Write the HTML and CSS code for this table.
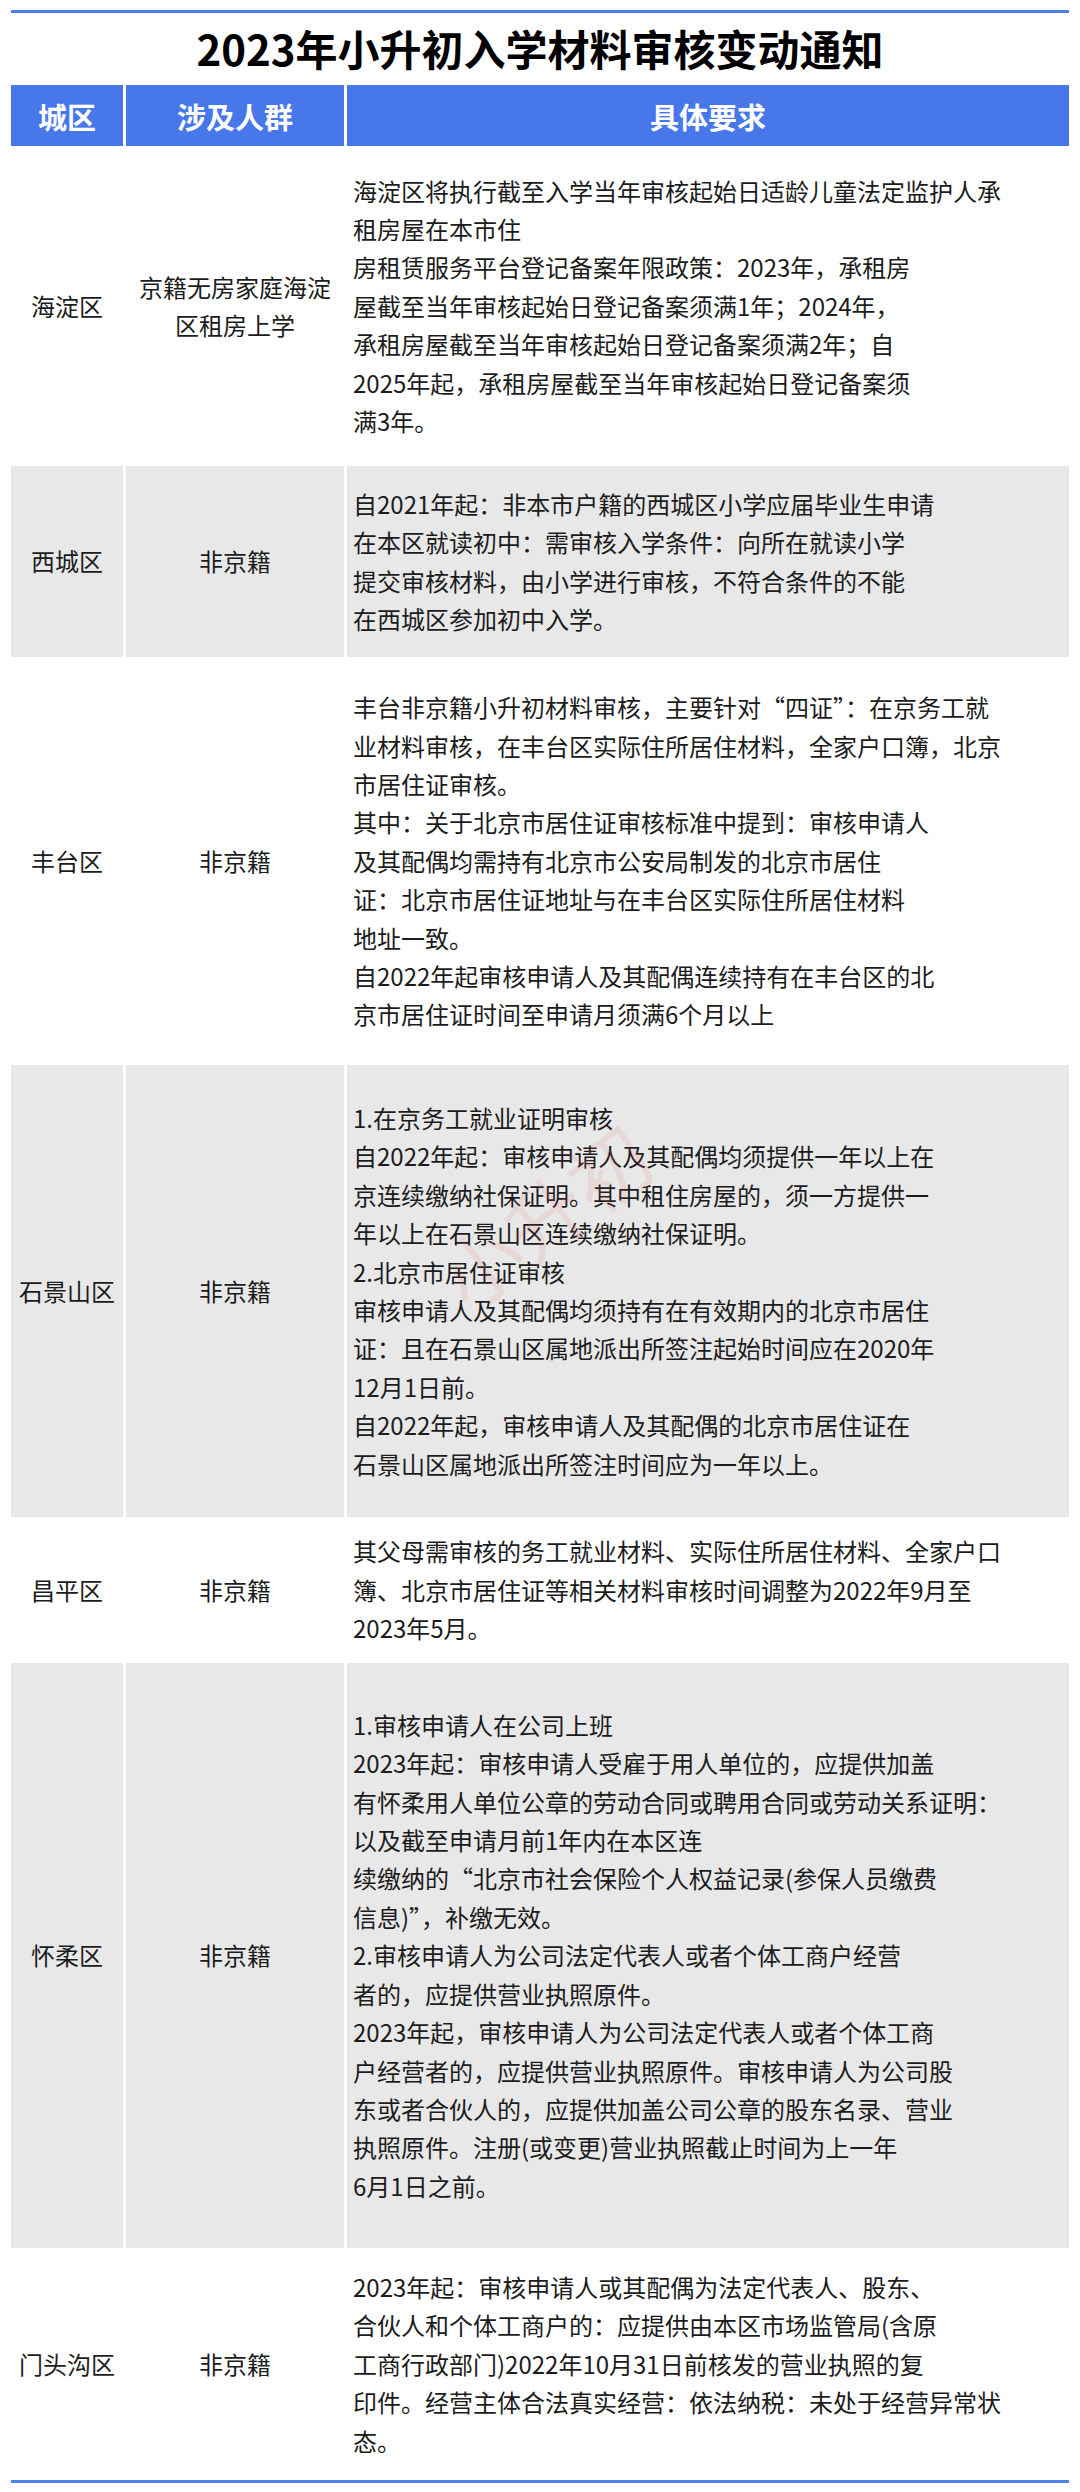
FILE: index.html
```html
<!DOCTYPE html>
<html lang="zh-CN">
<head>
<meta charset="utf-8">
<title>2023年小升初入学材料审核变动通知</title>
<link rel="stylesheet" href="styles.css">
</head>
<body>
<div class="page">
  <div class="rule"></div>
  <h1 class="title">2023年小升初入学材料审核变动通知</h1>
  <table class="grid">
    <colgroup>
      <col class="c-district">
      <col class="c-group">
      <col class="c-detail">
    </colgroup>
    <thead>
      <tr class="head">
        <th>城区</th>
        <th>涉及人群</th>
        <th>具体要求</th>
      </tr>
    </thead>
    <tbody>
      <tr class="row white h1">
        <td class="center">海淀区</td>
        <td class="center">京籍无房家庭海淀<br>区租房上学</td>
        <td class="detail">海淀区将执行截至入学当年审核起始日适龄儿童法定监护人承<br>租房屋在本市住<br>房租赁服务平台登记备案年限政策：2023年，承租房<br>屋截至当年审核起始日登记备案须满1年；2024年，<br>承租房屋截至当年审核起始日登记备案须满2年；自<br>2025年起，承租房屋截至当年审核起始日登记备案须<br>满3年。</td>
      </tr>
      <tr class="row gray h2">
        <td class="center">西城区</td>
        <td class="center">非京籍</td>
        <td class="detail">自2021年起：非本市户籍的西城区小学应届毕业生申请<br>在本区就读初中：需审核入学条件：向所在就读小学<br>提交审核材料，由小学进行审核，不符合条件的不能<br>在西城区参加初中入学。</td>
      </tr>
      <tr class="row white h3">
        <td class="center">丰台区</td>
        <td class="center">非京籍</td>
        <td class="detail">丰台非京籍小升初材料审核，主要针对“四证”：在京务工就<br>业材料审核，在丰台区实际住所居住材料，全家户口簿，北京<br>市居住证审核。<br>其中：关于北京市居住证审核标准中提到：审核申请人<br>及其配偶均需持有北京市公安局制发的北京市居住<br>证：北京市居住证地址与在丰台区实际住所居住材料<br>地址一致。<br>自2022年起审核申请人及其配偶连续持有在丰台区的北<br>京市居住证时间至申请月须满6个月以上</td>
      </tr>
      <tr class="row gray h4">
        <td class="center">石景山区</td>
        <td class="center">非京籍</td>
        <td class="detail"><div class="detail-box"><span class="watermark">小升初</span>1.在京务工就业证明审核<br>自2022年起：审核申请人及其配偶均须提供一年以上在<br>京连续缴纳社保证明。其中租住房屋的，须一方提供一<br>年以上在石景山区连续缴纳社保证明。<br>2.北京市居住证审核<br>审核申请人及其配偶均须持有在有效期内的北京市居住<br>证：且在石景山区属地派出所签注起始时间应在2020年<br>12月1日前。<br>自2022年起，审核申请人及其配偶的北京市居住证在<br>石景山区属地派出所签注时间应为一年以上。</div></td>
      </tr>
      <tr class="row white h5">
        <td class="center">昌平区</td>
        <td class="center">非京籍</td>
        <td class="detail">其父母需审核的务工就业材料、实际住所居住材料、全家户口<br>簿、北京市居住证等相关材料审核时间调整为2022年9月至<br>2023年5月。</td>
      </tr>
      <tr class="row gray h6">
        <td class="center">怀柔区</td>
        <td class="center">非京籍</td>
        <td class="detail">1.审核申请人在公司上班<br>2023年起：审核申请人受雇于用人单位的，应提供加盖<br>有怀柔用人单位公章的劳动合同或聘用合同或劳动关系证明：<br>以及截至申请月前1年内在本区连<br>续缴纳的“北京市社会保险个人权益记录(参保人员缴费<br>信息)”，补缴无效。<br>2.审核申请人为公司法定代表人或者个体工商户经营<br>者的，应提供营业执照原件。<br>2023年起，审核申请人为公司法定代表人或者个体工商<br>户经营者的，应提供营业执照原件。审核申请人为公司股<br>东或者合伙人的，应提供加盖公司公章的股东名录、营业<br>执照原件。注册(或变更)营业执照截止时间为上一年<br>6月1日之前。</td>
      </tr>
      <tr class="row white h7">
        <td class="center">门头沟区</td>
        <td class="center">非京籍</td>
        <td class="detail">2023年起：审核申请人或其配偶为法定代表人、股东、<br>合伙人和个体工商户的：应提供由本区市场监管局(含原<br>工商行政部门)2022年10月31日前核发的营业执照的复<br>印件。经营主体合法真实经营：依法纳税：未处于经营异常状<br>态。</td>
      </tr>
    </tbody>
  </table>
  <div class="rule"></div>
</div>
</body>
</html>
```

FILE: styles.css
```css
html, body {
  margin: 0;
  padding: 0;
  background: #ffffff;
}

body {
  font-family: "Noto Sans CJK SC", "Noto Sans", sans-serif;
  color: #1c1c1c;
}

.page {
  width: 1080px;
  padding: 10px 8px 0;
  box-sizing: border-box;
}

.rule {
  height: 3px;
  margin: 0 3px;
  background: #4e7fea;
}

.title {
  margin: 0;
  height: 69px;
  line-height: 69px;
  text-align: center;
  font-size: 42px;
  font-weight: 700;
  color: #000000;
  letter-spacing: 0;
}

.grid {
  width: 100%;
  table-layout: fixed;
  border-collapse: separate;
  border-spacing: 3px;
  background: #ffffff;
}

.c-district { width: 112px; }
.c-group { width: 218px; }

.head th {
  height: 61px;
  padding: 0;
  background: #4777e9;
  color: #ffffff;
  font-size: 29px;
  font-weight: 700;
  text-align: center;
  vertical-align: middle;
}

.row td {
  padding: 0;
  font-size: 24px;
  line-height: 38.4px;
  vertical-align: middle;
}

.row.gray td { background: #e8e8e8; }
.row.white td { background: #ffffff; }

.row td.center {
  text-align: center;
  padding: 0 4px;
}

.row td.detail {
  text-align: left;
  padding: 0 4px 0 6px;
  white-space: nowrap;
}

.detail-box {
  position: relative;
}

.watermark {
  position: absolute;
  left: 190px;
  top: 115px;
  font-size: 80px;
  line-height: 1;
  color: rgba(236, 96, 96, 0.12);
  transform: translate(-50%, -50%) rotate(-37deg);
  pointer-events: none;
  white-space: nowrap;
}

.h1 td { height: 314px; }
.h2 td { height: 191px; }
.h3 td { height: 402px; }
.h4 td { height: 452px; }
.h5 td { height: 140px; }
.h6 td { height: 585px; }
.h7 td { height: 226px; }
```
